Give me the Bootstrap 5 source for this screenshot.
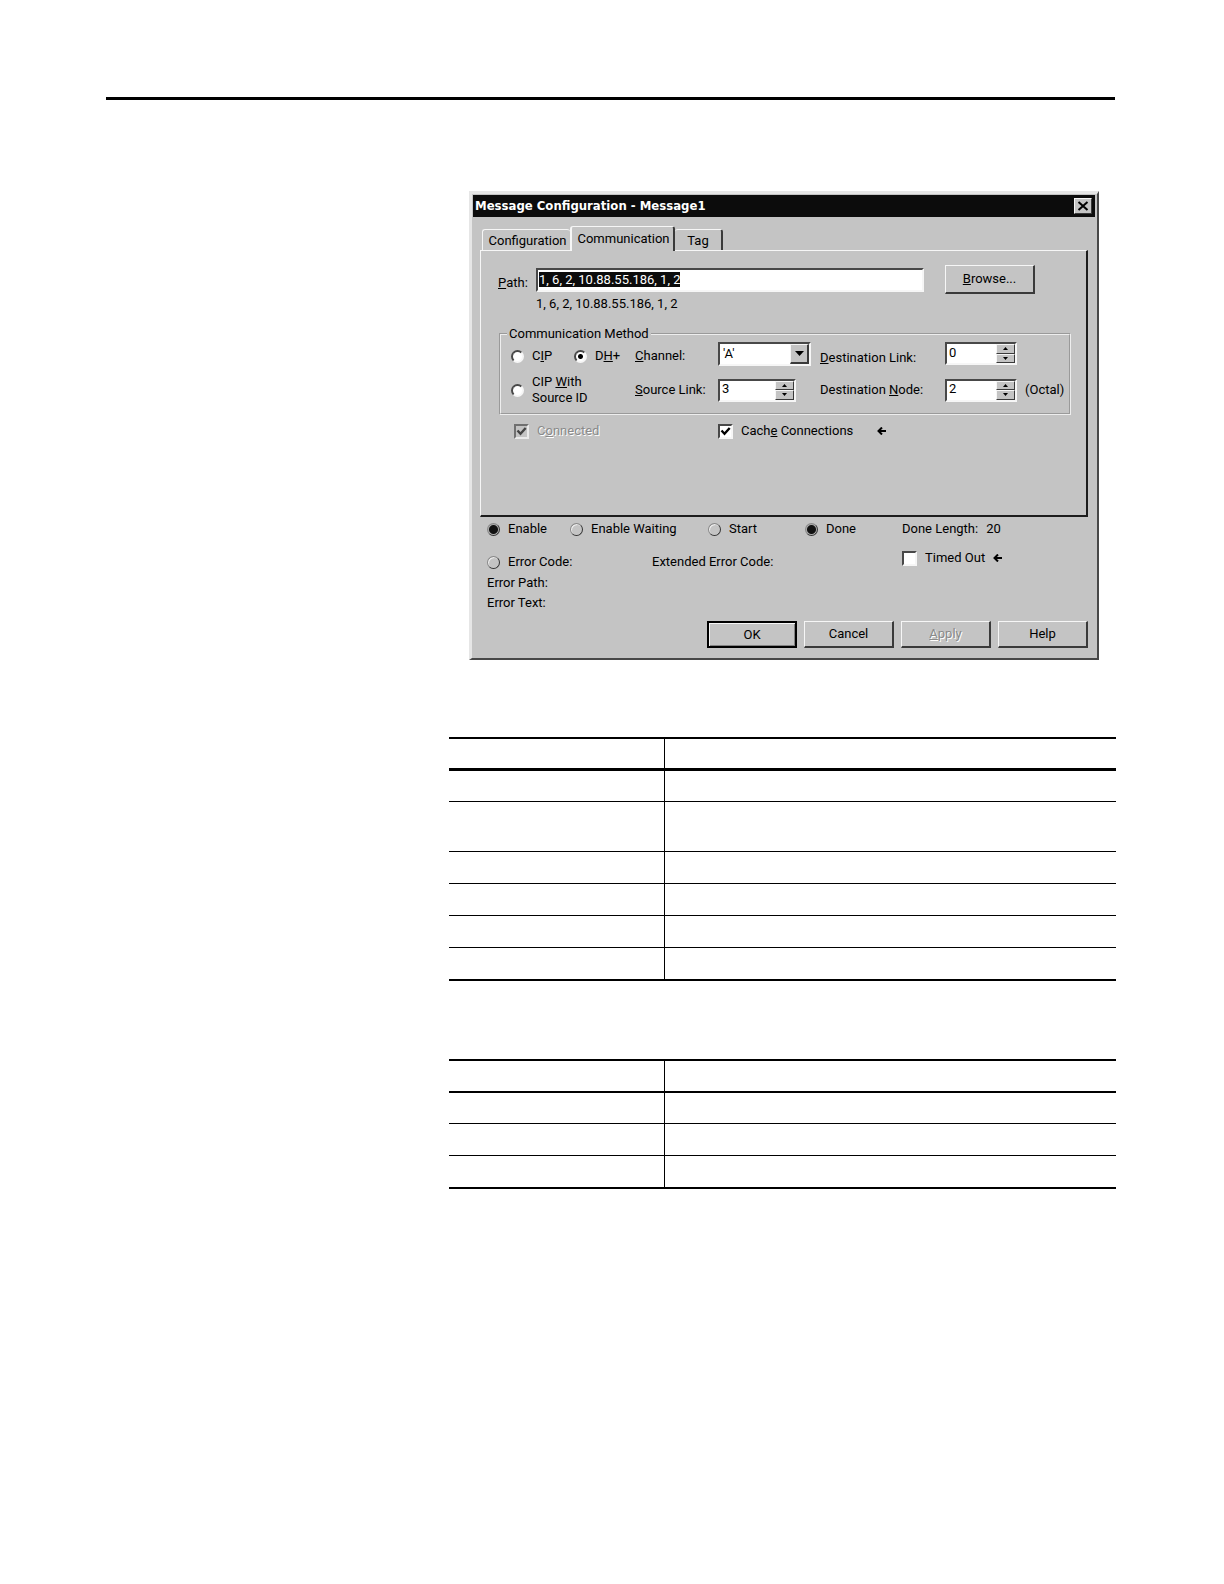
<!DOCTYPE html>
<html lang="en">
<head>
<meta charset="utf-8">
<meta name="viewport" content="width=device-width, initial-scale=1">
<title>Message Configuration - Message1</title>
<link href="https://cdn.jsdelivr.net/npm/bootstrap@5.3.0/dist/css/bootstrap.min.css" rel="stylesheet">
<style>
:root { --face: #c4c4c4; --hi: #f6f6f6; --lo: #3a3a3a; --mid: #828282; }
body { background: #fff; color: #000; font: 13px/16px Roboto, "Liberation Sans", sans-serif; }
.sheet { padding: 97px 108px 0 106px; }
.top-rule { border: 0; border-top: 3px solid #000; opacity: 1; margin: 0 1px 91px 0; }
.side-col { flex: 0 0 343px; }
.dlg { margin: 0 17px 77px 20px; background: var(--face); border: 3px solid #e6e6e6; border-right: 2px solid #484848; border-bottom: 2px solid #484848; }
.dlg-title { background: #0c0c0c; color: #fff; height: 22px; margin: 1px 2px 0 1px; padding: 0 3px 0 2px; }
.dlg-title h1 { font: bold 13px/16px "DejaVu Sans Condensed", "DejaVu Sans", sans-serif; margin: 0; }
.btn-face { background: var(--face); color: #000; border: 1px solid; border-color: var(--hi) var(--lo) var(--lo) var(--hi); border-radius: 0; padding: 0; font-size: 13px; line-height: 16px; }
.close-btn { width: 18px; height: 16px; }
.dlg-body { padding: 9px 9px 10px 8px; }
.tab-strip { height: 24px; padding-left: 2px; }
.tab-btn { background: var(--face); border: 0 solid var(--hi); border-top-width: 1px; border-radius: 3px 3px 0 0; color: #000; height: 21px; padding: 2px 0 0; font-size: 13px; line-height: 18px; }
.tab-conf { width: 88px; border-left-width: 1px; padding-left: 2px; }
.tab-tag { width: 48px; border-right: 2px solid var(--lo); }
.tab-btn.active { width: 105px; height: 25px; margin-bottom: -1px; padding: 0 0 1px 2px; border-left-width: 2px; border-right: 2px solid var(--lo); position: relative; }
.pane { border: 1px solid var(--hi); border-right: 2px solid #1c1c1c; border-bottom: 2px solid #1c1c1c; padding: 14px 15px 76px 17px; }
.path-row { padding-right: 36px; }
.path-label { width: 38px; padding-top: 10px; }
.path-col { padding-top: 3px; margin-right: 21px; }
.sunken { background: #fff; color: #000; border: 2px solid; border-color: #484848 var(--hi) var(--hi) #484848; border-radius: 0; font-size: 13px; line-height: 16px; }
.path-input { height: 24px; width: 100%; padding: 0 0 1px 1px; outline: 0; }
.path-input::selection { background: #0c0c0c; color: #fff; }
.path-echo { padding-top: 4px; }
.push { width: 90px; height: 27px; border-width: 1px 2px 2px 1px; }
.browse { height: 29px; }
.ok { border: 2px solid #000; box-shadow: inset 1px 1px var(--hi), inset -1px -1px var(--mid); }
.etched:disabled { color: #8a8a8a; background: var(--face); text-shadow: 1px 1px #fff; opacity: 1; border-color: var(--hi) var(--lo) var(--lo) var(--hi); }
.group { border: 2px groove #eee; margin: 14px 0 8px 1px; padding: 0 0 9px 10px; display: grid; grid-template-columns: 63px 61px 83px 102px 125px 1fr; row-gap: 10px; }
.group legend { float: none; width: auto; font-size: 13px; line-height: 16px; margin: 0 0 0 -4px; padding: 0 2px; }
.row-two { height: 28px; display: flex; align-items: center; }
.src-label { height: 32px; }
.tick, .dot { appearance: none; flex: none; margin: 0; background: #fff; }
.tick { width: 15px; height: 15px; border: 2px solid; border-color: #484848 var(--hi) var(--hi) #484848; }
.tick:checked { background: #fff url("data:image/svg+xml,%3Csvg xmlns='http://www.w3.org/2000/svg' viewBox='0 0 11 11'%3E%3Cpath d='M1.500 4.500l3 3.200L9.700 2' fill='none' stroke='%23000' stroke-width='2.400'/%3E%3C/svg%3E"); }
.tick:disabled { background-color: var(--face); opacity: .65; border-color: #444 #fff #fff #444; }
.dot { width: 13px; height: 13px; border-radius: 50%; border: 2px solid; border-color: #484848 var(--hi) var(--hi) #484848; }
.dot:checked { background: radial-gradient(circle, #000 0 2px, #fff 3px); }
.faded { color: #8a8a8a; text-shadow: 1px 1px #fff; }
.opts { padding-left: 16px; }
.opt-first { width: 204px; }
.pick { width: 93px; height: 24px; display: grid; position: relative; }
.pick select { appearance: none; width: 100%; padding: 0 20px 0 3px; }
.pick-arrow { position: absolute; right: 2px; top: 2px; width: 19px; height: 20px; pointer-events: none; border-width: 1px 2px 2px 1px; }
.spin { width: 72px; height: 23px; }
.spin-wide { width: 78px; }
.spin input { appearance: none; border: 0; width: 100%; min-width: 0; padding: 0 0 2px 2px; background: #fff; outline: 0; color: #000; }
.spin-keys { width: 19px; flex: none; background: #484848; }
.spin-keys button { flex: 1; min-height: 0; line-height: 0; }
.led { flex: none; width: 13px; height: 13px; border-radius: 50%; border: 1px solid; border-color: #888 #333 #333 #888; background: var(--face); box-shadow: inset 1px 1px #eee; }
.led.on { background: radial-gradient(circle, #111 0 4px, #aaa 5px); box-shadow: none; }
.status { display: grid; grid-template-columns: 83px 82px 56px 97px 97px 1fr; margin: 4px 0 5px 7px; row-gap: 13px; }
.span-2 { grid-column: span 2; }
.span-3 { grid-column: span 3; }
.err-lines { margin: 0 0 10px 7px; }
.btn-bar { gap: 7px; }
.ruled { width: 100%; border-collapse: separate; border-spacing: 0; table-layout: fixed; margin: 0 0 78px; }
.ruled td, .ruled th { padding: 0; height: 32px; border: 0 solid #000; border-bottom-width: 1px; }
.ruled tr > :first-child { border-right-width: 1px; width: 216px; }
.ruled th { height: 34px; border-top-width: 2px; border-bottom-width: 2px; }
.ruled.heavy th { border-bottom-width: 3px; }
.ruled tbody tr:first-child td { height: 31px; }
.ruled tbody tr.tall td { height: 50px; }
.ruled tbody tr:last-child td { height: 33px; border-bottom-width: 2px; }
</style>
<script src="https://cdn.jsdelivr.net/npm/bootstrap@5.3.0/dist/js/bootstrap.bundle.min.js"></script>
</head>
<body>
<div class="sheet">
  <hr class="top-rule">
  <div class="d-flex">
    <div class="side-col"></div>
    <main class="flex-grow-1">
      <section class="dlg" aria-label="Message Configuration">
        <header class="dlg-title d-flex align-items-center justify-content-between">
          <h1>Message Configuration - Message1</h1>
          <button type="button" class="btn-face close-btn d-flex align-items-center justify-content-center" aria-label="Close">
            <svg width="12" height="10" viewBox="0 0 12 10"><path d="M1.500 1l9 8M10.500 1l-9 8" stroke="#000" stroke-width="2"/></svg>
          </button>
        </header>
        <div class="dlg-body">
          <div class="tab-strip d-flex align-items-end" role="tablist">
            <button type="button" role="tab" class="tab-btn tab-conf">Configuration</button>
            <button type="button" role="tab" class="tab-btn active" aria-selected="true">Communication</button>
            <button type="button" role="tab" class="tab-btn tab-tag">Tag</button>
          </div>
          <div class="pane">
            <div class="path-row d-flex align-items-start">
              <label class="path-label" for="path"><u>P</u>ath:</label>
              <div class="path-col flex-grow-1">
                <input id="path" class="sunken path-input d-block" type="text" value="1, 6, 2, 10.88.55.186, 1, 2">
                <div class="path-echo">1, 6, 2, 10.88.55.186, 1, 2</div>
              </div>
              <button type="button" class="btn-face push browse"><u>B</u>rowse...</button>
            </div>
            <fieldset class="group">
              <legend>Communication Method</legend>
              <div class="d-flex align-items-center gap-2 pt-1"><input class="dot" type="radio" name="method" id="cip"><label for="cip">C<u>I</u>P</label></div>
              <div class="d-flex align-items-center gap-2 pt-1"><input class="dot" type="radio" name="method" id="dh" checked><label for="dh">D<u>H</u>+</label></div>
              <label class="align-self-center pt-1" for="channel"><u>C</u>hannel:</label>
              <div class="pick">
                <select id="channel" class="sunken"><option>'A'</option><option>'B'</option></select>
                <span class="btn-face pick-arrow d-flex align-items-center justify-content-center"><svg width="9" height="5" viewBox="0 0 9 5"><path d="M0 0h9L4.500 5z"/></svg></span>
              </div>
              <label class="align-self-end" for="dlink"><u>D</u>estination Link:</label>
              <div class="spin sunken d-flex">
                <input id="dlink" type="text" inputmode="numeric" value="0">
                <span class="spin-keys d-flex flex-column">
                  <button type="button" class="btn-face" aria-label="Increase"><svg class="d-block mx-auto" width="5" height="3" viewBox="0 0 5 3"><path d="M0 3h5L2.500 0z"/></svg></button>
                  <button type="button" class="btn-face" aria-label="Decrease"><svg class="d-block mx-auto" width="5" height="3" viewBox="0 0 5 3"><path d="M0 0h5L2.500 3z"/></svg></button>
                </span>
              </div>
              <div class="span-2 d-flex align-items-center gap-2 row-two"><input class="dot" type="radio" name="method" id="cipsrc"><label class="src-label" for="cipsrc">CIP <u>W</u>ith<br>Source ID</label></div>
              <label class="row-two" for="slink"><span><u>S</u>ource Link:</span></label>
              <div class="row-two"><div class="spin spin-wide sunken d-flex">
                <input id="slink" type="text" inputmode="numeric" value="3">
                <span class="spin-keys d-flex flex-column">
                  <button type="button" class="btn-face" aria-label="Increase"><svg class="d-block mx-auto" width="5" height="3" viewBox="0 0 5 3"><path d="M0 3h5L2.500 0z"/></svg></button>
                  <button type="button" class="btn-face" aria-label="Decrease"><svg class="d-block mx-auto" width="5" height="3" viewBox="0 0 5 3"><path d="M0 0h5L2.500 3z"/></svg></button>
                </span>
              </div></div>
              <label class="row-two" for="dnode"><span>Destination <u>N</u>ode:</span></label>
              <div class="row-two"><div class="spin sunken d-flex">
                <input id="dnode" type="text" inputmode="numeric" value="2">
                <span class="spin-keys d-flex flex-column">
                  <button type="button" class="btn-face" aria-label="Increase"><svg class="d-block mx-auto" width="5" height="3" viewBox="0 0 5 3"><path d="M0 3h5L2.500 0z"/></svg></button>
                  <button type="button" class="btn-face" aria-label="Decrease"><svg class="d-block mx-auto" width="5" height="3" viewBox="0 0 5 3"><path d="M0 0h5L2.500 3z"/></svg></button>
                </span>
              </div><span class="ms-2">(Octal)</span></div>
            </fieldset>
            <div class="opts d-flex">
              <div class="opt-first d-flex align-items-center gap-2"><input class="tick" type="checkbox" id="conn" checked disabled><label class="faded" for="conn">C<u>o</u>nnected</label></div>
              <div class="d-flex align-items-center gap-2"><input class="tick" type="checkbox" id="cache" checked><label for="cache">Cach<u>e</u> Connections</label>
                <svg class="ms-3" width="9" height="8" viewBox="0 0 9 8"><path d="M9 4H2M5 .500L1.500 4 5 7.500" fill="none" stroke="#000" stroke-width="2"/></svg>
              </div>
            </div>
          </div>
          <div class="status">
            <div class="d-flex align-items-center gap-2"><span class="led on"></span>Enable</div>
            <div class="span-2 d-flex align-items-center gap-2"><span class="led"></span>Enable Waiting</div>
            <div class="d-flex align-items-center gap-2"><span class="led"></span>Start</div>
            <div class="d-flex align-items-center gap-2"><span class="led on"></span>Done</div>
            <div class="d-flex align-items-center gap-2"><span>Done Length:</span><span>20</span></div>
            <div class="span-2 d-flex align-items-end"><span class="d-flex align-items-center gap-2"><span class="led"></span>Error Code:</span></div>
            <div class="span-3 align-self-end">Extended Error Code:</div>
            <div class="d-flex align-items-center gap-2 pb-1"><input class="tick" type="checkbox" id="timed"><label for="timed">Timed Out</label>
              <svg class="ms-n1" width="9" height="8" viewBox="0 0 9 8"><path d="M9 4H2M5 .500L1.500 4 5 7.500" fill="none" stroke="#000" stroke-width="2"/></svg>
            </div>
          </div>
          <div class="err-lines d-grid gap-1"><span>Error Path:</span><span>Error Text:</span></div>
          <div class="btn-bar d-flex justify-content-end">
            <button type="button" class="btn-face push ok">OK</button>
            <button type="button" class="btn-face push">Cancel</button>
            <button type="button" class="btn-face push etched" disabled><u>A</u>pply</button>
            <button type="button" class="btn-face push">Help</button>
          </div>
        </div>
      </section>

      <table class="ruled heavy">
        <thead><tr><th></th><th></th></tr></thead>
        <tbody>
          <tr><td></td><td></td></tr>
          <tr class="tall"><td></td><td></td></tr>
          <tr><td></td><td></td></tr>
          <tr><td></td><td></td></tr>
          <tr><td></td><td></td></tr>
          <tr><td></td><td></td></tr>
        </tbody>
      </table>
      <table class="ruled">
        <thead><tr><th></th><th></th></tr></thead>
        <tbody>
          <tr><td></td><td></td></tr>
          <tr><td></td><td></td></tr>
          <tr><td></td><td></td></tr>
        </tbody>
      </table>
    </main>
  </div>
</div>
<script>
  const path = document.getElementById('path');
  path.focus();
  path.select();
</script>
</body>
</html>
